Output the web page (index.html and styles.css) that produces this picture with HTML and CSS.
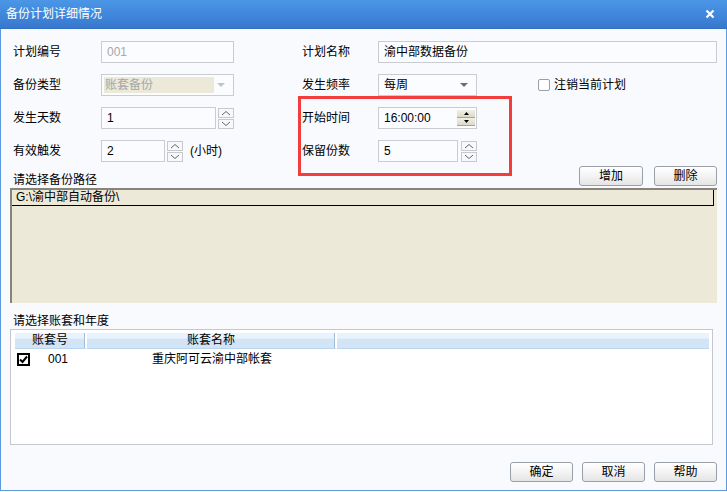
FILE: index.html
```html
<!DOCTYPE html>
<html>
<head>
<meta charset="utf-8">
<link rel="stylesheet" href="styles.css">
</head>
<body>
<div class="dialog">
  <div class="titlebar">
    <span class="title">备份计划详细情况</span>
    <svg class="close" width="10" height="10" viewBox="0 0 10 10"><path d="M1.5 1.5 L8.5 8.5 M8.5 1.5 L1.5 8.5" stroke="#fff" stroke-width="2.2" fill="none"/></svg>
  </div>
  <div class="body">
    <div class="form">
      <div class="lbl">计划编号</div>
      <div class="ctl"><div class="input dis w133">001</div></div>
      <div class="lbl">计划名称</div>
      <div class="ctl"><div class="input wfull">渝中部数据备份</div></div>

      <div class="lbl">备份类型</div>
      <div class="ctl">
        <div class="combo w133 disabled"><span class="combo-text">账套备份</span><span class="arrow gray"></span></div>
      </div>
      <div class="lbl">发生频率</div>
      <div class="ctl">
        <div class="combo w99"><span class="combo-text">每周</span><span class="arrow"></span></div>
        <div class="check"><span class="cbox"></span>注销当前计划</div>
      </div>

      <div class="lbl">发生天数</div>
      <div class="ctl">
        <div class="input w115">1</div>
        <div class="spin">
          <span class="sbtn"><svg width="10" height="6" viewBox="0 0 10 6"><polyline points="1,5 5,1.5 9,5" fill="none" stroke="#666" stroke-width="1"/></svg></span>
          <span class="sbtn"><svg width="10" height="6" viewBox="0 0 10 6"><polyline points="1,1 5,4.5 9,1" fill="none" stroke="#666" stroke-width="1"/></svg></span>
        </div>
      </div>
      <div class="lbl">开始时间</div>
      <div class="ctl">
        <div class="input w99 time">16:00:00
          <div class="tspin">
            <span class="tbtn"><svg width="5" height="3" viewBox="0 0 5 3"><polygon points="0,3 2.5,0 5,3" fill="#000"/></svg></span>
            <span class="tbtn"><svg width="5" height="3" viewBox="0 0 5 3"><polygon points="0,0 2.5,3 5,0" fill="#000"/></svg></span>
          </div>
        </div>
      </div>

      <div class="lbl">有效触发</div>
      <div class="ctl">
        <div class="input w64">2</div>
        <div class="spin">
          <span class="sbtn"><svg width="10" height="6" viewBox="0 0 10 6"><polyline points="1,5 5,1.5 9,5" fill="none" stroke="#666" stroke-width="1"/></svg></span>
          <span class="sbtn"><svg width="10" height="6" viewBox="0 0 10 6"><polyline points="1,1 5,4.5 9,1" fill="none" stroke="#666" stroke-width="1"/></svg></span>
        </div>
        <span class="unit">(小时)</span>
      </div>
      <div class="lbl">保留份数</div>
      <div class="ctl">
        <div class="input w80">5</div>
        <div class="spin sp3">
          <span class="sbtn"><svg width="10" height="6" viewBox="0 0 10 6"><polyline points="1,5 5,1.5 9,5" fill="none" stroke="#666" stroke-width="1"/></svg></span>
          <span class="sbtn"><svg width="10" height="6" viewBox="0 0 10 6"><polyline points="1,1 5,4.5 9,1" fill="none" stroke="#666" stroke-width="1"/></svg></span>
        </div>
      </div>
    </div>

    <div class="section-head">
      <span class="sec-label">请选择备份路径</span>
      <div class="head-btns">
        <button class="btn b64">增加</button>
        <button class="btn b63">删除</button>
      </div>
    </div>
    <div class="pathbox">
      <div class="path-item">G:\渝中部自动备份\</div>
    </div>

    <div class="sec-label2">请选择账套和年度</div>
    <div class="gridbox">
      <div class="ghead">
        <div class="gcol c1">账套号</div>
        <div class="gcol c2">账套名称</div>
        <div class="gcol c3"></div>
      </div>
      <div class="grow">
        <span class="tcheck"><svg width="11" height="11" viewBox="0 0 11 11"><polyline points="2,5.5 4.5,8 9,2.5" fill="none" stroke="#000" stroke-width="2"/></svg></span>
        <span class="gno">001</span>
        <span class="gname">重庆阿可云渝中部帐套</span>
      </div>
    </div>

    <div class="footer">
      <button class="btn b63">确定</button>
      <button class="btn b63">取消</button>
      <button class="btn b63">帮助</button>
    </div>
  </div>
  <div class="highlight"></div>
</div>
</body>
</html>
```

FILE: styles.css
```css
* { box-sizing: border-box; }
html, body { margin: 0; padding: 0; background: #fff; }
body {
  font-family: "Liberation Sans", "Noto Sans CJK SC", sans-serif;
  font-size: 12px;
  line-height: 16px;
  color: #000;
}
.dialog {
  position: relative;
  width: 727px;
  height: 491px;
  background: #f9fafe;
  border: 1px solid #5a9be2;
  border-top: none;
  display: flex;
  flex-direction: column;
}
.titlebar {
  height: 29px;
  margin: 0 -1px;
  background: linear-gradient(#4b96e6, #3d82d8 70%, #3877cc);
  border-bottom: 1px solid #3170c2;
  display: flex;
  align-items: center;
  justify-content: space-between;
  padding: 0 12px 0 6px;
  color: #fff;
}
.title { font-size: 12px; }
.close { display: block; }
.body {
  padding: 0 9px 0 9px;
  display: flex;
  flex-direction: column;
}
.form {
  margin-top: 12px;
  padding-left: 3px;
  display: grid;
  grid-template-columns: 88px 201px 76px 1fr;
  grid-template-rows: 22px 22px 22px 22px;
  row-gap: 11px;
  align-items: center;
}
.lbl { line-height: 16px; }
.ctl { display: flex; align-items: center; height: 22px; }
.input {
  position: relative;
  height: 22px;
  border: 1px solid #c9ccd0;
  background: #fbfcff;
  padding: 2px 5px;
  line-height: 16px;
}
.input.dis { color: #a7a7a7; }
.w133 { width: 133px; }
.w115 { width: 115px; }
.w99 { width: 99px; }
.w80 { width: 80px; }
.w64 { width: 64px; }
.wfull { flex: 1; }
.combo {
  height: 22px;
  border: 1px solid #c9ccd0;
  background: #fbfcff;
  display: flex;
  align-items: center;
  padding: 2px;
  justify-content: space-between;
}
.combo-text { padding-left: 3px; line-height: 16px; }
.combo.disabled .combo-text {
  background: #ece9d8;
  color: #a7a7a7;
  flex: 0 0 110px;
  height: 16px;
  padding-left: 1px;
}
.arrow {
  width: 0; height: 0;
  border-left: 4px solid transparent;
  border-right: 4px solid transparent;
  border-top: 4px solid #6d6d6d;
  margin-right: 6px;
}
.arrow.gray { border-top-color: #c4c4c4; }
.check {
  margin-left: 61px;
  display: flex;
  align-items: center;
}
.cbox {
  width: 12px; height: 12px;
  border: 1px solid #9a9ea4;
  border-radius: 2px;
  background: #fff;
  margin-right: 4px;
}
.spin {
  margin-left: 2px;
  display: flex;
  flex-direction: column;
  gap: 1px;
}
.spin.sp3 { margin-left: 3px; }
.sbtn {
  width: 16px; height: 10px;
  border: 1px solid #c6c9cd;
  background: #f7f8fb;
  display: flex;
  align-items: center;
  justify-content: center;
}
.unit { margin-left: 7px; }
.time .tspin {
  position: absolute;
  right: 1px;
  top: 2px;
  display: flex;
  flex-direction: column;
}
.tbtn {
  width: 18px; height: 8px;
  background: linear-gradient(#f2f0e6, #ddd9c6);
  border-bottom: 1px solid #a8a491;
  display: flex;
  align-items: center;
  justify-content: center;
}
.section-head {
  margin-top: 4px;
  height: 20px;
  padding-left: 3px;
  display: flex;
  justify-content: space-between;
  align-items: flex-end;
}
.sec-label { line-height: 16px; margin-bottom: -2px; }
.head-btns { display: flex; gap: 11px; }
.btn {
  height: 20px;
  font: inherit;
  line-height: 16px;
  padding: 0;
  border: 1px solid #9aa0a8;
  border-radius: 3px;
  background: linear-gradient(#ffffff, #f3f3f3 50%, #e4e4e4);
  color: #000;
}
.b64 { width: 64px; }
.b63 { width: 63px; }
.pathbox {
  margin-top: 2px;
  height: 115px;
  background: #ece9d8;
  border-top: 2px solid #86847b;
  border-left: 2px solid #86847b;
  padding: 0 3px 0 0;
}
.path-item {
  height: 16px;
  border-right: 1px solid #000;
  border-bottom: 1px solid #000;
  padding-left: 4px;
  line-height: 15px;
}
.sec-label2 {
  margin-top: 10px;
  padding-left: 3px;
  height: 16px;
  line-height: 16px;
}
.gridbox {
  width: 703px;
  height: 116px;
  border: 1px solid #c4c7cd;
  background: #fff;
  padding: 3px 3px 0 4px;
}
.ghead {
  display: flex;
  height: 16px;
}
.gcol {
  background: linear-gradient(#e9f3fd 0, #e9f3fd 35%, #d2e4f6 40%, #d2e4f6 100%);
  border-bottom: 1px solid #b9d6ee;
  text-align: center;
  line-height: 15px;
  border-right: 2px solid #fff;
  box-shadow: inset -1px 0 0 #9fbcd8;
}
.c1 { width: 72px; }
.c2 { width: 250px; }
.c3 { flex: 1; border-right: none; box-shadow: none; }
.grow {
  display: flex;
  align-items: center;
  height: 18px;
  margin-top: 1px;
}
.tcheck {
  width: 13px; height: 13px;
  border: 1px solid #000;
  outline: 1px solid #000;
  outline-offset: -2px;
  display: flex;
  align-items: center;
  justify-content: center;
  margin-left: 2px;
  background: #fff;
}
.gno { margin-left: 18px; }
.gname { margin-left: 84px; }
.footer {
  margin-top: 17px;
  display: flex;
  justify-content: flex-end;
  gap: 9px;
}
.highlight {
  position: absolute;
  left: 297px;
  top: 96px;
  width: 214px;
  height: 80px;
  border: 3px solid #f33d3d;
}
```
